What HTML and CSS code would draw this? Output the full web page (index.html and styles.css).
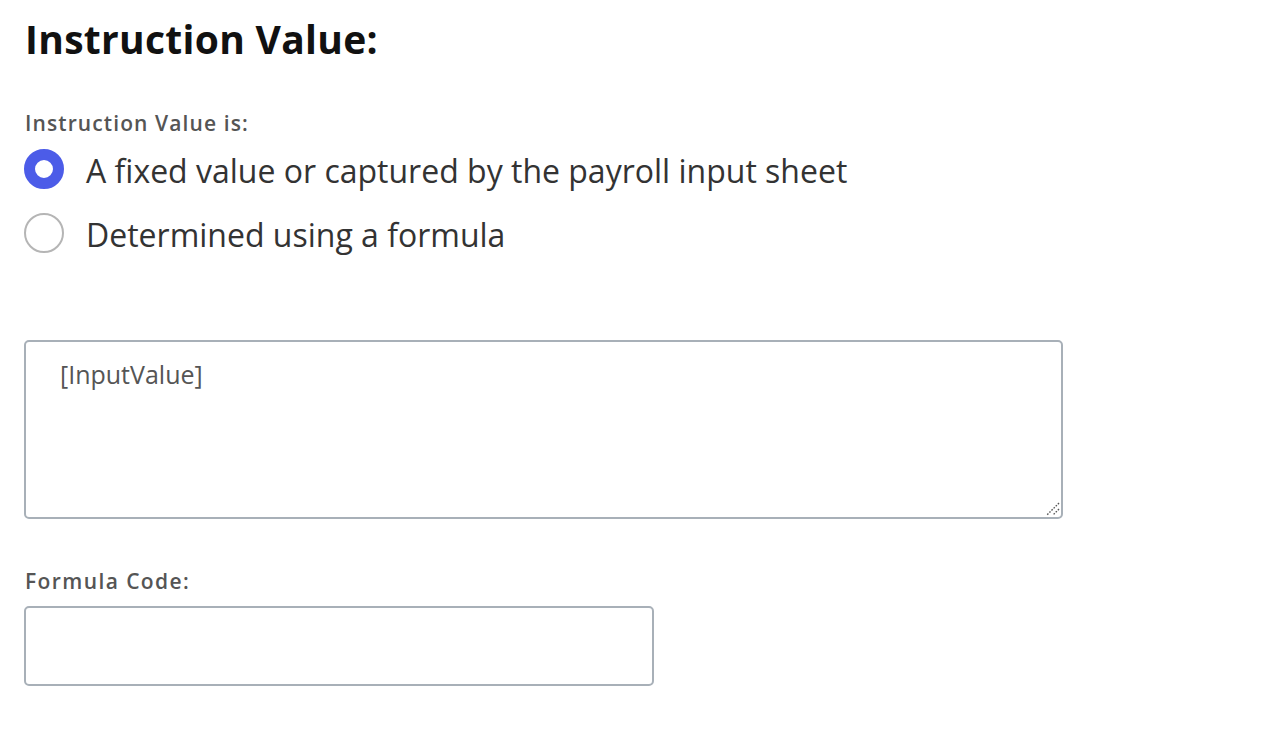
FILE: index.html
```html
<!DOCTYPE html>
<html>
<head>
<meta charset="utf-8">
<link rel="stylesheet" href="styles.css">
</head>
<body>
<div class="page">
  <h1 class="title">Instruction Value:</h1>
  <div class="label">Instruction Value is:</div>
  <div class="radios">
    <label class="radio-row"><span class="radio checked"></span><span class="radio-text">A fixed value or captured by the payroll input sheet</span></label>
    <label class="radio-row"><span class="radio"></span><span class="radio-text">Determined using a formula</span></label>
  </div>
  <div class="textarea">[InputValue]<svg class="grip" width="16" height="16" viewBox="0 0 16 16"><path d="M15 3 L3 15 M15 9 L9 15" stroke="#555" stroke-width="1.4" stroke-dasharray="1.6 1.4" fill="none"/></svg></div>
  <div class="label label-code">Formula Code:</div>
  <div class="input"></div>
</div>
</body>
</html>
```
FILE: styles.css
```css
html, body { margin: 0; padding: 0; background: #fff; }
body { font-family: "Open Sans", "Noto Sans", sans-serif; color: #222; }
.page { padding: 14px 24px 0 24px; display: flex; flex-direction: column; align-items: flex-start; }
.title { margin: 0; font-size: 39px; font-weight: 700; color: #111; line-height: 50px; padding-left: 1px; letter-spacing: 0.3px; }
.label { font-size: 21px; font-weight: 600; color: #555; margin-top: 45px; line-height: 28px; padding-left: 1px; letter-spacing: 1.1px; }
.radios { display: flex; flex-direction: column; gap: 24px; margin-top: 12px; }
.radio-row { display: flex; align-items: center; gap: 22px; height: 40px; }
.radio { width: 40px; height: 40px; box-sizing: border-box; border: 2px solid #b5b5b5; border-radius: 50%; background: #fff; flex: none; }
.radio.checked { border: 11px solid #4c5ce8; background: #fff; }
.radio-text { font-size: 32px; color: #333; line-height: 40px; position: relative; top: 2px; }
.textarea { position: relative; margin-top: 87px; width: 1039px; height: 179px; box-sizing: border-box; border: 2px solid #a8b0b8; border-radius: 5px; padding: 15px 34px; font-size: 25px; color: #555; line-height: 34px; }
.grip { position: absolute; right: 1px; bottom: 1px; }
.label-code { margin-top: 48px; letter-spacing: 1.4px; }
.input { margin-top: 11px; width: 630px; height: 80px; box-sizing: border-box; border: 2px solid #a8b0b8; border-radius: 5px; }
```
